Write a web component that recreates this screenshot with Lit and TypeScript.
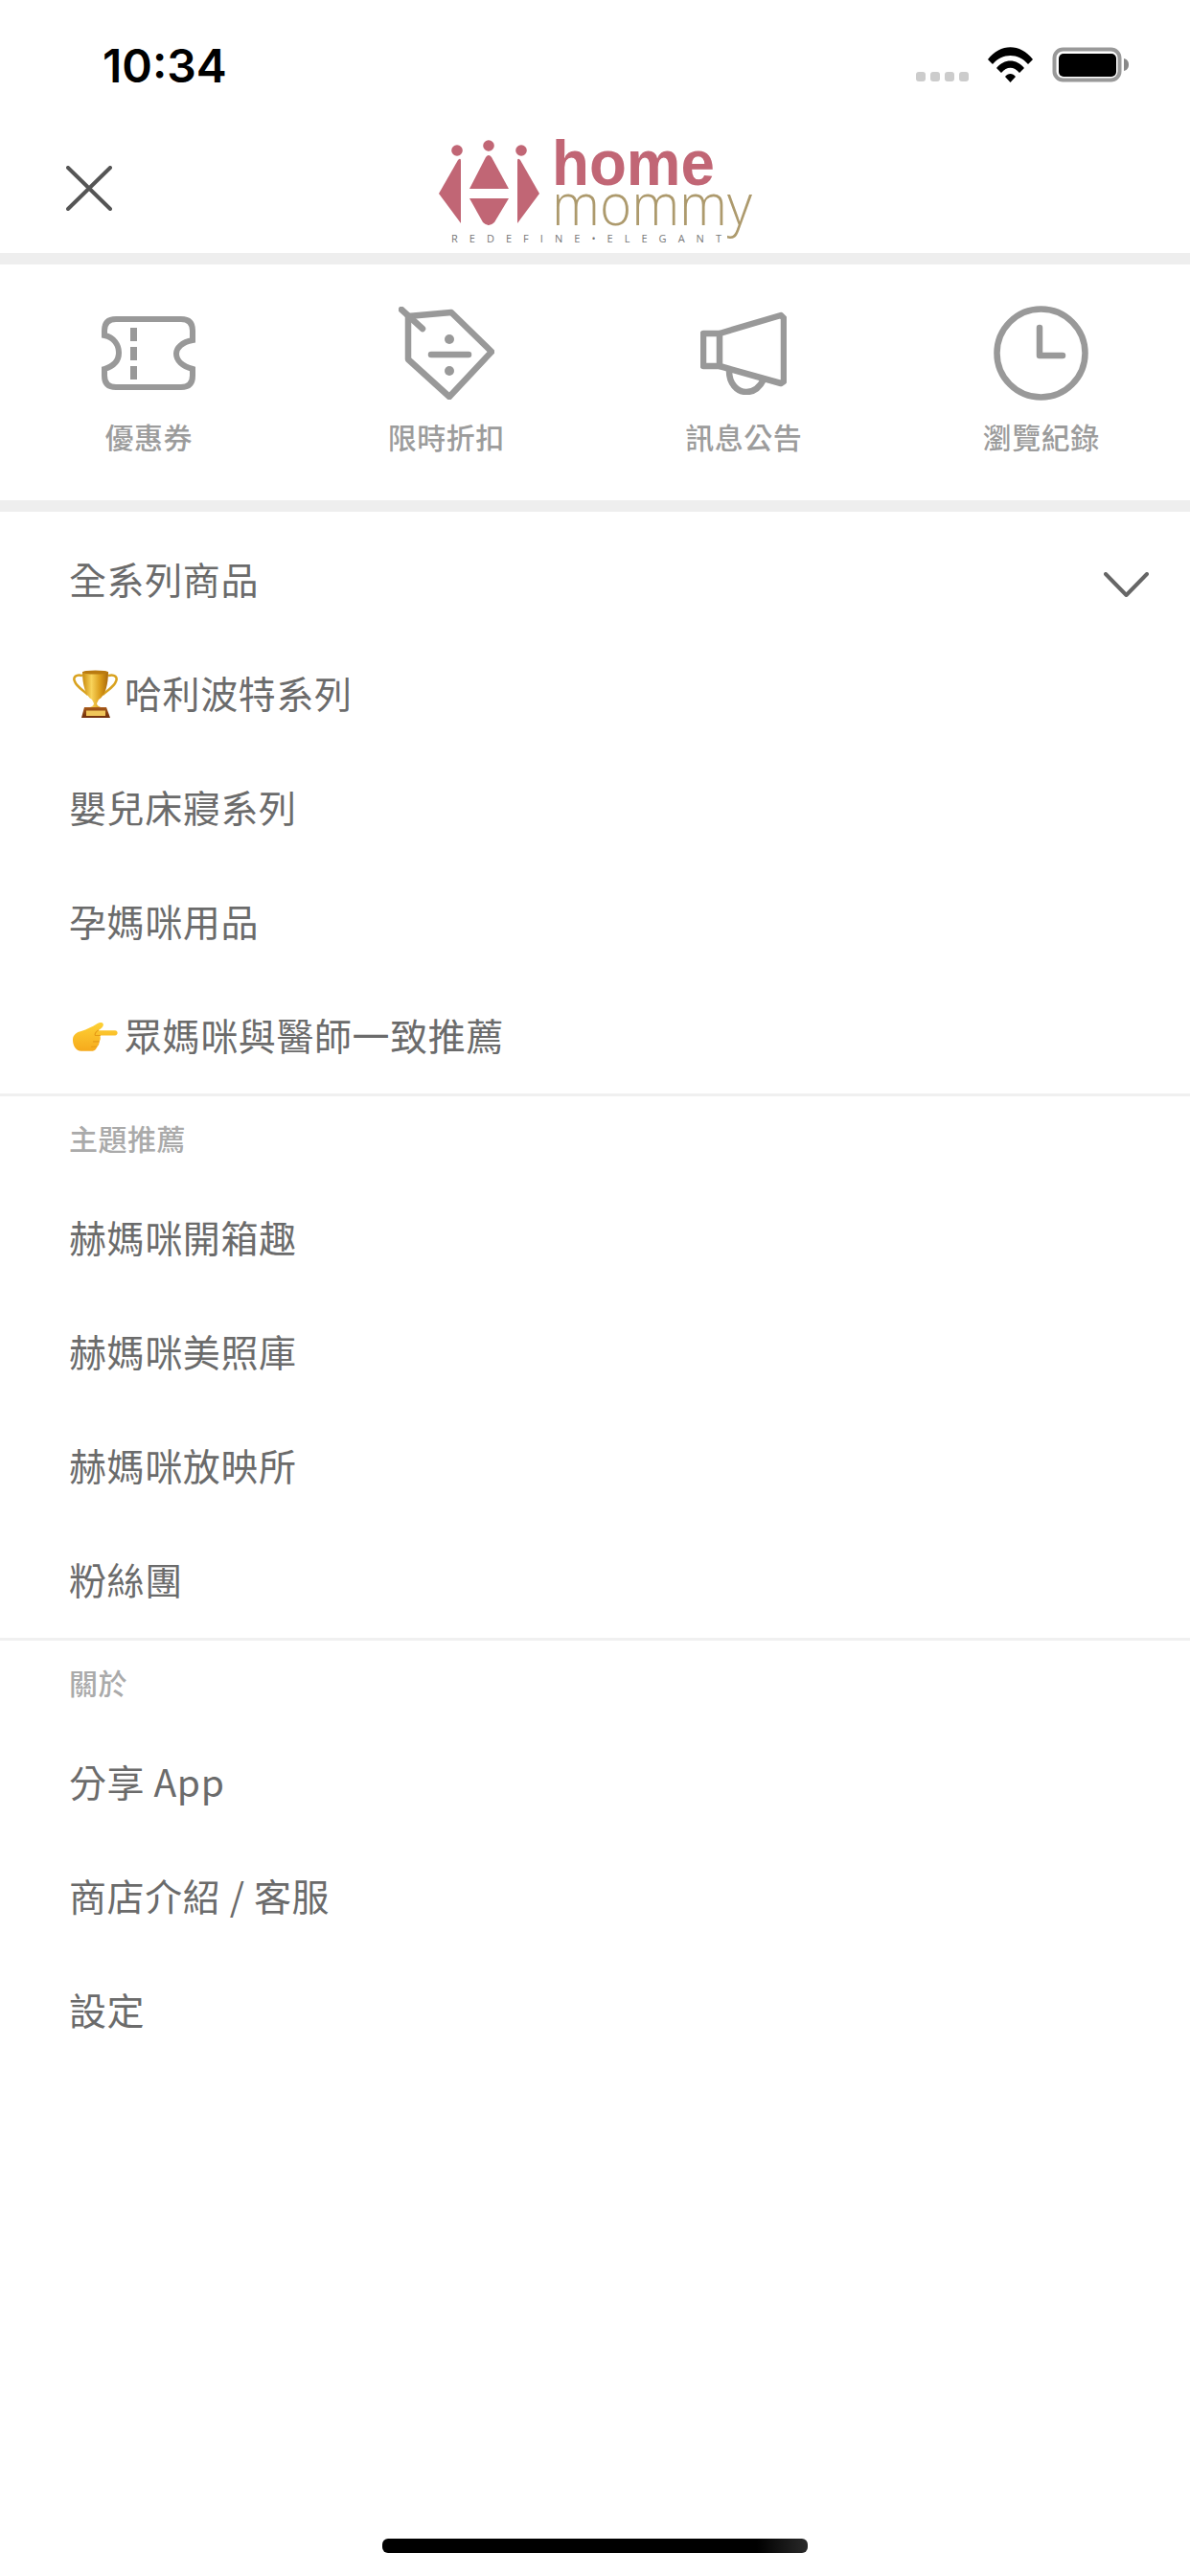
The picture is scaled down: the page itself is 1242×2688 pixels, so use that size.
import { LitElement, html, svg, css } from 'lit';
import { customElement } from 'lit/decorators.js';

const closeIcon = html`<svg class="close" viewBox="0 0 48 47" width="48" height="47" fill="none" stroke="#555" stroke-width="4" stroke-linecap="round">
  <path d="M2 2 46 45M46 2 2 45" />
</svg>`;

const chevron = html`<svg class="chevron" viewBox="0 0 47 26" width="47" height="26" fill="none" stroke="#666" stroke-width="4" stroke-linecap="round" stroke-linejoin="round">
  <path d="M2 2 23.5 24 45 2" />
</svg>`;

const ticketIcon = svg`<svg viewBox="0 0 98 77" width="98" height="77" fill="none" stroke="#999" stroke-width="6">
  <path d="M15 3H83Q95 3 95 15V25C84 27 78 33 78 39C78 46 84 52 95 55V62Q95 74 83 74H15Q3 74 3 62V55C13 52 18 46 18 38C18 30 13 22 3 20V15Q3 3 15 3Z" />
  <path d="M33.500 12V26M33.500 32V46M33.500 52V66" stroke-width="7" />
</svg>`;

const tagIcon = svg`<svg viewBox="0 0 100 97" width="100" height="97" fill="none" stroke="#999" stroke-width="6.500" stroke-linecap="round" stroke-linejoin="round">
  <path d="M10 10 55 6 97 47 53 94 10 55Z" />
  <path d="M3 3 25 23M34 50H73" />
  <circle cx="53" cy="34" r="5" fill="#999" stroke="none" />
  <circle cx="53" cy="67" r="5" fill="#999" stroke="none" />
</svg>`;

const megaphoneIcon = svg`<svg viewBox="0 0 90 87" width="90" height="87" fill="none" stroke="#999" stroke-width="6.500" stroke-linejoin="round">
  <path d="M3 23H20V57H3Z" />
  <path d="M20 23 84 4 87 7V73L84 75 20 57" />
  <path d="M30 62C30 75 38 84 48 84C56 84 62 79 66 71" />
</svg>`;

const clockIcon = svg`<svg viewBox="0 0 99 99" width="99" height="99" fill="none" stroke="#999" stroke-width="6.500" stroke-linecap="round" stroke-linejoin="round">
  <circle cx="49.500" cy="49.500" r="46" />
  <path d="M48 23V52H72" />
</svg>`;

const trophy = html`<svg class="emoji" viewBox="6 3 47 50" width="47" height="50">
  <defs>
    <linearGradient id="cup" x1="0" x2="1" y1="0" y2="0">
      <stop offset="0" stop-color="#c98a0c" />
      <stop offset="0.35" stop-color="#f8d35a" />
      <stop offset="0.7" stop-color="#d99a18" />
      <stop offset="1" stop-color="#a9680a" />
    </linearGradient>
    <linearGradient id="base" x1="0" x2="0" y1="0" y2="1">
      <stop offset="0" stop-color="#a85a1a" />
      <stop offset="1" stop-color="#6f2f0c" />
    </linearGradient>
  </defs>
  <path d="M16 9C9 7 6 11 8 15C10 21 17 24 22 29M43 9C50 7 53 11 51 15C49 21 42 24 37 29" fill="none" stroke="#d9a21f" stroke-width="2.500" />
  <path d="M16 5H43C43 18 40 30 33 34L31 38C31 40 33 41 35 42H24C26 41 28 40 28 38L26 34C19 30 16 18 16 5Z" fill="url(#cup)" />
  <ellipse cx="29.500" cy="5.500" rx="13.500" ry="2" fill="#b97a10" />
  <path d="M18 42H41L45 53H15Z" fill="url(#base)" />
  <rect x="20" y="45.500" width="20" height="5.500" fill="#f0c65a" />
</svg>`;

const pointing = html`<svg class="emoji" viewBox="5 11 48 31" width="47" height="31">
  <defs>
    <linearGradient id="hand" x1="0" x2="0" y1="0" y2="1">
      <stop offset="0" stop-color="#fdd135" />
      <stop offset="1" stop-color="#f6aa1c" />
    </linearGradient>
  </defs>
  <path d="M5 30C5 25 9 22 14 21C20 19 26 16 30 13.500C33 11.500 37 11 37.500 13.500C38 16 35 18.500 32 20H50C53.500 20 53.500 25.500 50 25.500H34C35 29 34 31 33 32C33.500 35 32 37 30.500 37.500C30.500 40 28.500 42 26 42H14C8 42 5 36 5 30Z" fill="url(#hand)" />
  <path d="M32 20C29 22 28 24 29 25.500H34M33 32H27M30.500 37.500H25" fill="none" stroke="#e59a16" stroke-width="1.200" stroke-linecap="round" />
</svg>`;

interface Shortcut {
  label: string;
  icon: unknown;
}

interface Row {
  text: string;
  emoji?: unknown;
  expand?: boolean;
}

const shortcuts: Shortcut[] = [
  { label: '優惠券', icon: ticketIcon },
  { label: '限時折扣', icon: tagIcon },
  { label: '訊息公告', icon: megaphoneIcon },
  { label: '瀏覽紀錄', icon: clockIcon },
];

const sections: { title?: string; rows: Row[] }[] = [
  {
    rows: [
      { text: '全系列商品', expand: true },
      { text: '哈利波特系列', emoji: trophy },
      { text: '嬰兒床寢系列' },
      { text: '孕媽咪用品' },
      { text: '眾媽咪與醫師一致推薦', emoji: pointing },
    ],
  },
  {
    title: '主題推薦',
    rows: [
      { text: '赫媽咪開箱趣' },
      { text: '赫媽咪美照庫' },
      { text: '赫媽咪放映所' },
      { text: '粉絲團' },
    ],
  },
  {
    title: '關於',
    rows: [
      { text: '分享 App' },
      { text: '商店介紹 / 客服' },
      { text: '設定' },
    ],
  },
];

@customElement('app-root')
export class AppRoot extends LitElement {
  static styles = css`
    :host {
      display: flex;
      flex-direction: column;
      width: 1242px;
      height: 2688px;
      background: #fff;
      overflow: hidden;
      font-family: 'Noto Sans CJK TC', 'Noto Sans', sans-serif;
    }
    .status {
      display: flex;
      align-items: center;
      height: 132px;
      padding: 0 64px 0 107px;
      box-sizing: border-box;
    }
    .time {
      font: 600 48px/1 Inter, sans-serif;
      color: #000;
      margin-top: 5px;
    }
    .status-right {
      margin-left: auto;
      display: flex;
      align-items: flex-start;
      margin-top: 3px;
    }
    .dots {
      display: flex;
      gap: 5px;
      margin: 26px 20px 0 0;
    }
    .dots i {
      width: 10px;
      height: 10px;
      border-radius: 3px;
      background: #ccc;
    }
    .battery {
      margin-left: 20px;
    }
    .header {
      display: grid;
      grid-template-columns: 1fr auto 1fr;
      align-items: center;
      height: 132px;
    }
    .close {
      margin: -3px 0 0 69px;
    }
    .logo {
      display: block;
      overflow: visible;
    }
    .band {
      height: 12px;
      background: #eee;
    }
    .shortcuts {
      display: grid;
      grid-template-columns: repeat(4, 1fr);
      height: 246px;
      box-sizing: border-box;
      padding-top: 43px;
    }
    .shortcut {
      display: flex;
      flex-direction: column;
      align-items: center;
    }
    .shortcut .glyph {
      display: flex;
      align-items: center;
      justify-content: center;
      height: 99px;
    }
    .shortcut span {
      margin-top: 17px;
      font-size: 30px;
      font-weight: 500;
      line-height: 40px;
      letter-spacing: 0.5px;
      color: #9c9c9c;
    }
    .rows {
      padding-top: 11.5px;
    }
    .section + .section {
      border-top: 3px solid #f0f0f0;
    }
    .title {
      height: 89px;
      box-sizing: border-box;
      padding: 0 0 3px 72px;
      display: flex;
      align-items: center;
      font-size: 30px;
      font-weight: 500;
      letter-spacing: 0.5px;
      color: #aaa;
    }
    .row {
      display: flex;
      align-items: center;
      height: 119px;
      box-sizing: border-box;
      padding: 0 43px 5px 72px;
      font-size: 39px;
      letter-spacing: 0.6px;
      color: #6b6b6b;
    }
    .emoji {
      margin: 5px 7px 0 4px;
      flex: none;
    }
    .chevron {
      margin: 15px 0 0 auto;
    }
    .home {
      width: 444px;
      height: 15px;
      margin: auto auto 24px;
      border-radius: 6px;
      background: linear-gradient(90deg, #000 88%, #2a2a2a 100%);
    }
  `;

  private renderStatus() {
    return html`<div class="status">
      <div class="time">10:34</div>
      <div class="status-right">
        <div class="dots"><i></i><i></i><i></i><i></i></div>
        <svg viewBox="0 0 47 37" width="47" height="37">
          <path d="M0 13C13 -4 34 -4 47 13L42 18C32 6 15 6 5 18Z" />
          <path d="M9 22C17 12 30 12 38 22L33 27C27 20 20 20 14 27Z" />
          <path d="M18 31C21 27 26 27 29 31L23.500 37Z" />
        </svg>
        <svg class="battery" viewBox="0 0 80 37" width="80" height="37">
          <rect x="2.500" y="2.500" width="68" height="32" rx="9" fill="none" stroke="#999" stroke-width="4" />
          <rect x="7" y="7" width="60" height="24" rx="5" />
          <path d="M75 12C79 13 80 16 80 18.500C80 21 79 24 75 25Z" fill="#888" />
        </svg>
      </div>
    </div>`;
  }

  private renderLogo() {
    return svg`<svg class="logo" viewBox="451 132 340 132" width="340" height="132">
      <g fill="#c16675">
        <circle cx="477" cy="157" r="5.800" />
        <circle cx="510" cy="152" r="5.800" />
        <circle cx="544" cy="157" r="5.800" />
        <path d="M458 202 478 167Q481 164 481 168V233Z" />
        <path d="M563 202 543 167Q540 164 540 168V233Z" />
        <path d="M490 197 507 164Q510 160 513 164L531 197Z" />
        <path d="M490 207H531L516 232Q510 238 504 232Z" />
        <text x="576" y="193" font-family="Liberation Sans" font-weight="700" font-size="66" textLength="170" lengthAdjust="spacingAndGlyphs">home</text>
      </g>
      <text x="576" y="235" fill="#ad9a6d" font-family="Open Sans" font-weight="300" font-size="60" textLength="209" lengthAdjust="spacingAndGlyphs">mommy</text>
      <text x="471" y="253" fill="#777" font-family="Open Sans" font-size="11" textLength="282">REDEFINE•ELEGANT</text>
    </svg>`;
  }

  render() {
    return html`
      ${this.renderStatus()}
      <div class="header">
        ${closeIcon}
        ${this.renderLogo()}
        <div></div>
      </div>
      <div class="band"></div>
      <div class="shortcuts">
        ${shortcuts.map(
          (s) => html`<div class="shortcut">
            <div class="glyph">${s.icon}</div>
            <span>${s.label}</span>
          </div>`,
        )}
      </div>
      <div class="band"></div>
      <div class="rows">
        ${sections.map(
          (sec) => html`<div class="section">
            ${sec.title ? html`<div class="title">${sec.title}</div>` : ''}
            ${sec.rows.map(
              (r) => html`<div class="row">
                ${r.emoji ?? ''}<span>${r.text}</span>${r.expand ? chevron : ''}
              </div>`,
            )}
          </div>`,
        )}
      </div>
      <div class="home"></div>
    `;
  }
}
